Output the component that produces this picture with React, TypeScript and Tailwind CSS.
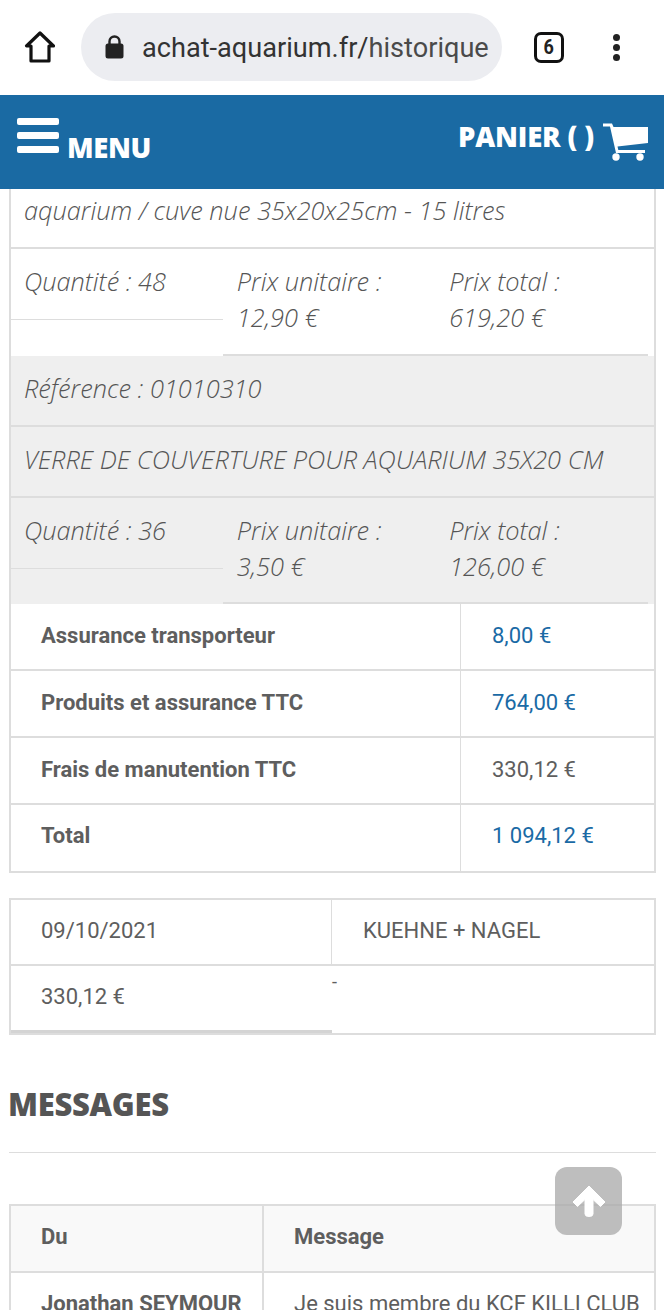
const openSans = "font-['Open_Sans',sans-serif]";
const roboto = "font-['Roboto',sans-serif]";

function ProductLines({ qty, unit, total, height }: { qty: string; unit: string; total: string; height: string }) {
    return (
        <div className={`flex ${height}`}>
            <div className="w-[212px] h-[71px] border-b border-[#dddddd] pl-[13px] pt-[14px] leading-[36px]">
                <span>Quantité : {qty}</span>
            </div>
            <div className="w-[212.5px] h-full border-b-2 border-[#dddddd] pl-[14px] pt-[14px] leading-[36px]">
                <div>Prix unitaire :</div>
                <div>{unit}</div>
            </div>
            <div className="w-[213px] mr-[6px] h-full border-b-2 border-[#dddddd] pl-[14px] pt-[14px] leading-[36px]">
                <div>Prix total :</div>
                <div>{total}</div>
            </div>
        </div>
    );
}

function TotalRow({ label, value, blue, last }: { label: string; value: string; blue?: boolean; last?: boolean }) {
    return (
        <div className={`flex ${last ? "h-[66px]" : "h-[67px] border-b-2 border-[#dddddd]"}`}>
            <div className={`w-[450px] border-r border-[#dddddd] pl-[30px] flex items-center font-bold text-[22px] text-[#5e5e5e] ${last ? "pb-[5px]" : "pb-[2px]"}`}>
                {label}
            </div>
            <div className={`pl-[31px] flex items-center text-[22px] ${last ? "pb-[5px]" : "pb-[2px]"} ${blue ? "text-[#1a6aa5]" : "text-[#5e5e5e]"}`}>
                {value}
            </div>
        </div>
    );
}

export default function App() {
    return (
        <div className={`relative w-[664px] h-[1310px] overflow-hidden bg-white ${roboto}`}>
            {/* Browser bar */}
            <div className="h-[95px] flex items-center">
                <svg viewBox="0 0 32 34" className="ml-[24px] mt-[-2px] w-[32px] h-[34px]" fill="none" stroke="#111111" strokeWidth="3.2" strokeLinejoin="round">
                    <path d="M16 3 L2.5 16 H7 V31 H25 V16 H29.5 Z" />
                </svg>
                <div className="ml-[25px] w-[421px] h-[68px] mt-[-1px] rounded-[34px] bg-[#ecedf1] flex items-center pl-[24px]">
                    <svg viewBox="0 0 19 24" className="w-[19px] h-[24px]">
                        <path d="M4.5 10 V6.5 A5 5 0 0 1 14.5 6.5 V10" fill="none" stroke="#222222" strokeWidth="2.4" />
                        <rect x="0.5" y="8.5" width="18" height="15" rx="2.5" fill="#222222" />
                    </svg>
                    <span className="ml-[18px] mt-[2px] text-[27.15px] text-[#333333] whitespace-nowrap">
                        achat-aquarium.fr/<span className="text-[#4a4a4a]">historique</span>
                    </span>
                </div>
                <div className="ml-[32px] mt-[-1px] w-[30px] h-[31px] rounded-[7px] border-[3px] border-[#111111] flex items-center justify-center">
                    <span className="text-[20px] font-bold text-[#222222] scale-x-90">6</span>
                </div>
                <div className="ml-[49px] mt-[-1px] flex flex-col gap-[3px]">
                    <div className="w-[7px] h-[7px] rounded-full bg-[#222222]" />
                    <div className="w-[7px] h-[7px] rounded-full bg-[#222222]" />
                    <div className="w-[7px] h-[7px] rounded-full bg-[#222222]" />
                </div>
            </div>

            {/* Site header */}
            <div className={`h-[94px] bg-[#1a6aa3] flex justify-between text-white font-extrabold ${openSans}`}>
                <div className="flex pl-[17px] pt-[23px]">
                    <div className="flex flex-col gap-[7px]">
                        <div className="w-[42px] h-[7px] rounded-[2px] bg-white" />
                        <div className="w-[42px] h-[7px] rounded-[2px] bg-white" />
                        <div className="w-[42px] h-[7px] rounded-[2px] bg-white" />
                    </div>
                    <span className="ml-[8px] mt-[5px] text-[27.5px] leading-[50px] h-[50px] tracking-[-0.4px]">MENU</span>
                </div>
                <div className="flex pr-[16px] pt-[25px]">
                    <span className="text-[27.5px] leading-[34px] tracking-[-0.15px] h-[34px]">PANIER ( )</span>
                    <svg viewBox="0 0 45 38" className="ml-[9px] mt-[3px] w-[45px] h-[38px]" fill="white">
                        <path d="M0 0.5 H9 L10.5 4 H45 V20 L14.5 23.5 L15.3 27 H42 V30 H13 L7 3.5 H0 Z" />
                        <circle cx="13" cy="34" r="3.7" />
                        <circle cx="37" cy="34" r="3.7" />
                    </svg>
                </div>
            </div>

            {/* Order lines */}
            <div className="mx-[9px] border-x-2 border-[#dddddd] w-[647px]">
                <div className={`font-light italic text-[25.35px] text-[#555555] ${openSans}`}>
                    <div className="h-[60px] border-b-2 border-[#dddddd] pl-[13px] pt-[3px] leading-[36px]">
                        aquarium / cuve nue 35x20x25cm - 15 litres
                    </div>
                    <ProductLines qty="48" unit="12,90 €" total="619,20 €" height="h-[107px]" />
                    <div className="bg-[#efefef]">
                        <div className="h-[71px] border-b-2 border-[#dddddd] pl-[13px] flex items-center pb-[4px]">
                            Référence : 01010310
                        </div>
                        <div className="h-[71px] border-b-2 border-[#dddddd] pl-[13px] flex items-center pb-[4px]">
                            VERRE DE COUVERTURE POUR AQUARIUM 35X20 CM
                        </div>
                        <ProductLines qty="36" unit="3,50 €" total="126,00 €" height="h-[106px]" />
                    </div>
                </div>
                <TotalRow label="Assurance transporteur" value="8,00 €" blue />
                <TotalRow label="Produits et assurance TTC" value="764,00 €" blue />
                <TotalRow label="Frais de manutention TTC" value="330,12 €" />
                <TotalRow label="Total" value="1 094,12 €" blue last />
            </div>
            <div className="mx-[9px] w-[647px] h-[2px] bg-[#dddddd]" />

            {/* Delivery */}
            <div className="mt-[25px] mx-[9px] w-[647px] border-2 border-[#dddddd] text-[22px] text-[#5e5e5e]">
                <div className="flex h-[66px] border-b-2 border-[#dddddd]">
                    <div className="w-[321px] border-r border-[#dddddd] pl-[30px] flex items-center pb-[4px]">09/10/2021</div>
                    <div className="pl-[31px] flex items-center pb-[4px]">KUEHNE + NAGEL</div>
                </div>
                <div className="flex h-[67px]">
                    <div className="w-[321px] border-b-[3px] border-[#d4d4d4] pl-[30px] flex items-center pb-[3px]">330,12 €</div>
                    <div className="text-[18px] leading-[32px]">-</div>
                </div>
            </div>

            {/* Messages */}
            <h2 className={`mt-[47px] ml-[8px] text-[31px] leading-[44px] font-extrabold text-[#555555] tracking-[-0.3px] ${openSans}`}>
                MESSAGES
            </h2>
            <div className="mt-[26px] mx-[9px] w-[647px] h-px bg-[#dddddd]" />
            <div className="mt-[51px] mx-[9px] w-[647px] border-x-2 border-t-2 border-[#dddddd] text-[22px] text-[#5e5e5e]">
                <div className="flex h-[67px] bg-[#f9f9f9] border-b-2 border-[#dddddd] font-bold">
                    <div className="w-[253px] border-r-2 border-[#dddddd] pl-[30px] flex items-center pb-[4px]">Du</div>
                    <div className="pl-[30px] flex items-center pb-[4px]">Message</div>
                </div>
                <div className="flex h-[60px]">
                    <div className="w-[253px] border-r-2 border-[#dddddd] pl-[30px] pt-[14px] font-bold whitespace-nowrap">Jonathan SEYMOUR</div>
                    <div className="pl-[30px] pt-[14px] whitespace-nowrap">Je suis membre du KCF KILLI CLUB</div>
                </div>
            </div>

            {/* Back to top */}
            <div className="absolute left-[555px] top-[1167px] w-[67px] h-[68px] rounded-[12px] bg-[#a8a8a8]/75 flex items-center justify-center">
                <svg viewBox="0 0 34 32" className="w-[34px] h-[32px]" fill="white" stroke="white" strokeLinejoin="round">
                    <path d="M17 1 L33 17 L28.5 21.5 L21 14.5 V29 Q21 31.5 17 31.5 Q13 31.5 13 29 V14.5 L5.5 21.5 L1 17 Z" />
                </svg>
            </div>
        </div>
    );
}
